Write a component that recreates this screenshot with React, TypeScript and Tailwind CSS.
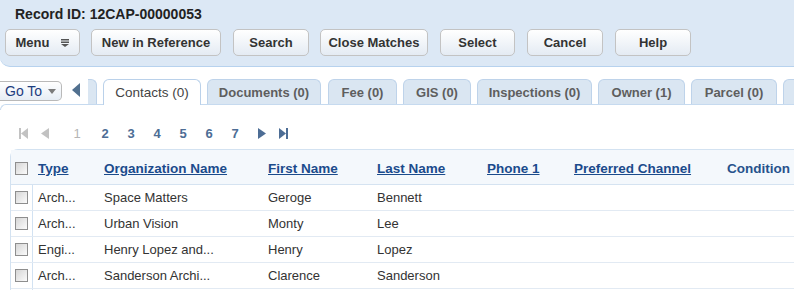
import React from 'react'

const buttons = [
  { label: 'New in Reference', cls: 'ml-[11px] w-[130px]' },
  { label: 'Search', cls: 'ml-[12px] w-[76px]' },
  { label: 'Close Matches', cls: 'ml-[11px] w-[108px]' },
  { label: 'Select', cls: 'ml-[12px] w-[75px]' },
  { label: 'Cancel', cls: 'ml-[12px] w-[76px]' },
  { label: 'Help', cls: 'ml-[12px] w-[76px]' },
]

const tabs = [
  { label: 'Documents (0)', cls: 'ml-[6px] w-[114px]' },
  { label: 'Fee (0)', cls: 'ml-[7px] w-[69px]' },
  { label: 'GIS (0)', cls: 'ml-[6px] w-[68px]' },
  { label: 'Inspections (0)', cls: 'ml-[6px] w-[115px]' },
  { label: 'Owner (1)', cls: 'ml-[6px] w-[87px]' },
  { label: 'Parcel (0)', cls: 'ml-[6px] w-[86px]' },
]

const columns = [
  { label: 'Type', cls: 'w-[66px]' },
  { label: 'Organization Name', cls: 'w-[164px]' },
  { label: 'First Name', cls: 'w-[109px]' },
  { label: 'Last Name', cls: 'w-[110px]' },
  { label: 'Phone 1', cls: 'w-[87px]' },
  { label: 'Preferred Channel', cls: 'w-[153px]' },
]

const rows = [
  ['Arch...', 'Space Matters', 'Geroge', 'Bennett'],
  ['Arch...', 'Urban Vision', 'Monty', 'Lee'],
  ['Engi...', 'Henry Lopez and...', 'Henry', 'Lopez'],
  ['Arch...', 'Sanderson Archi...', 'Clarence', 'Sanderson'],
]

function Checkbox() {
  return <div className="h-[13px] w-[13px] shrink-0 border border-[#8e8e8e] bg-linear-to-br from-[#d6d6d6] to-[#fbfbfb]" />
}

function Btn({ label, cls, children }: { label: string; cls: string; children?: React.ReactNode }) {
  return (
    <div className={`${cls} flex h-[27px] shrink-0 items-center justify-center gap-[12px] rounded-[5px] border border-[#c3c3c3] bg-linear-to-b from-white to-[#e4ebf3] font-bold text-[#333]`}>
      {label}
      {children}
    </div>
  )
}

export default function App() {
  return (
    <div className="h-[290px] w-[794px] overflow-hidden bg-white font-['Liberation_Sans',Arial,sans-serif] text-[13px] leading-[15px]">
      {/* Record header */}
      <div className="h-[67px] rounded-bl-[10px] border-b border-[#b7d2ee] bg-[#dce8f5] pt-[7px]">
        <div className="pl-[15px] text-[14px] font-bold text-[#222]">Record ID: 12CAP-00000053</div>
        <div className="mt-[7px] flex pl-[5px]">
          <Btn label="Menu" cls="w-[75px]">
            <svg width="8" height="8" viewBox="0 0 8 8" className="text-[#555]">
              <rect x="0" y="0" width="8" height="1.5" fill="currentColor" />
              <rect x="0" y="2.5" width="8" height="1.5" fill="currentColor" />
              <polygon points="0,5 8,5 4,8" fill="currentColor" />
            </svg>
          </Btn>
          {buttons.map((b) => (
            <Btn key={b.label} label={b.label} cls={b.cls} />
          ))}
        </div>
      </div>

      {/* Tab strip */}
      <div className="relative z-10 mt-[12px] flex h-[26px] items-start">
        <div className="mt-[2px] flex h-[20px] w-[62px] shrink-0 items-center rounded-r-[5px] border border-l-0 border-[#b9b9b9] bg-linear-to-b from-white to-[#e6edf5] pl-[5px] text-[14px] text-[#1d3d7e]">
          Go To
          <svg width="8" height="5" viewBox="0 0 8 5" className="ml-[6px]">
            <polygon points="0,0 8,0 4,5" fill="#7b7b7b" />
          </svg>
        </div>
        <svg width="8" height="14" viewBox="0 0 8 14" className="ml-[10px] mt-[4px] shrink-0">
          <polygon points="8,0 8,14 0,7" fill="#51708f" />
        </svg>
        <div className="ml-[8px] h-[25px] w-[9px] shrink-0 rounded-tr-[6px] border-t border-r border-[#bed3ea] bg-[#dae6f2]" />
        <div className="ml-[6px] flex h-[26px] w-[98px] shrink-0 items-center justify-center rounded-t-[6px] border border-b-0 border-[#bad1ea] bg-white text-[13.5px] text-[#444]">
          Contacts (0)
        </div>
        {tabs.map((t) => (
          <div key={t.label} className={`${t.cls} flex h-[25px] shrink-0 items-center justify-center rounded-t-[6px] border border-b-0 border-[#bed3ea] bg-[#dae6f2] font-bold text-[#5e5e5e]`}>
            {t.label}
          </div>
        ))}
        <div className="ml-[6px] h-[25px] w-[40px] shrink-0 rounded-tl-[6px] border-t border-l border-[#bed3ea] bg-[#dae6f2]" />
      </div>
      <div className="-mt-px h-[6px] rounded-tl-[6px] border-t border-l border-[#c6daef]" />

      {/* Pagination */}
      <div className="mt-[15px] flex h-[16px] items-center font-bold text-[#4d6d95]">
        <svg width="9" height="11" viewBox="0 0 9 11" className="ml-[19px]">
          <rect x="0" y="0" width="2" height="11" fill="#c2c2c2" />
          <polygon points="9,0 9,11 2,5.5" fill="#c2c2c2" />
        </svg>
        <svg width="8" height="11" viewBox="0 0 8 11" className="ml-[13px]">
          <polygon points="8,0 8,11 0,5.5" fill="#c2c2c2" />
        </svg>
        <span className="ml-[15px] w-[26px] text-center font-normal text-[#b5b5b5]">1</span>
        <span className="ml-[2px] w-[26px] text-center">2</span>
        <span className="w-[26px] text-center">3</span>
        <span className="w-[26px] text-center">4</span>
        <span className="w-[26px] text-center">5</span>
        <span className="w-[26px] text-center">6</span>
        <span className="w-[26px] text-center">7</span>
        <svg width="8" height="11" viewBox="0 0 8 11" className="ml-[10px]">
          <polygon points="0,0 0,11 8,5.5" fill="#4d6d95" />
        </svg>
        <svg width="9" height="11" viewBox="0 0 9 11" className="ml-[13px]">
          <polygon points="0,0 0,11 7,5.5" fill="#4d6d95" />
          <rect x="7" y="0" width="2" height="11" fill="#4d6d95" />
        </svg>
      </div>

      {/* Contacts table */}
      <div className="ml-[10px] mt-[8px] rounded-tl-[8px] border-t border-l border-[#d3e2f1]">
        <div className="flex h-[35px] items-center border-b border-[#d5e3f1] bg-[#f4f8fc] pt-[3px]">
          <div className="w-[22px] shrink-0 pl-[4px]">
            <Checkbox />
          </div>
          {columns.map((c) => (
            <div key={c.label} className={`${c.cls} shrink-0 pl-[5px] text-[13.5px] font-bold text-[#1b4b8c] underline`}>
              {c.label}
            </div>
          ))}
          <div className="shrink-0 pl-[5px] text-[13.5px] font-bold text-[#27528c]">Condition</div>
        </div>
        {rows.map((r, i) => (
          <div key={i} className="flex h-[26px] items-stretch border-b border-[#e2eaf3] text-[#333]">
            <div className="flex w-[22px] shrink-0 items-center border-r border-[#d2e2f2] pl-[4px]">
              <Checkbox />
            </div>
            <div className="flex w-[66px] shrink-0 items-center pl-[5px]">{r[0]}</div>
            <div className="flex w-[164px] shrink-0 items-center pl-[5px]">{r[1]}</div>
            <div className="flex w-[109px] shrink-0 items-center pl-[5px]">{r[2]}</div>
            <div className="flex w-[110px] shrink-0 items-center pl-[5px]">{r[3]}</div>
          </div>
        ))}
        <div className="h-[10px] w-[22px] border-r border-[#d2e2f2]" />
      </div>
    </div>
  )
}
